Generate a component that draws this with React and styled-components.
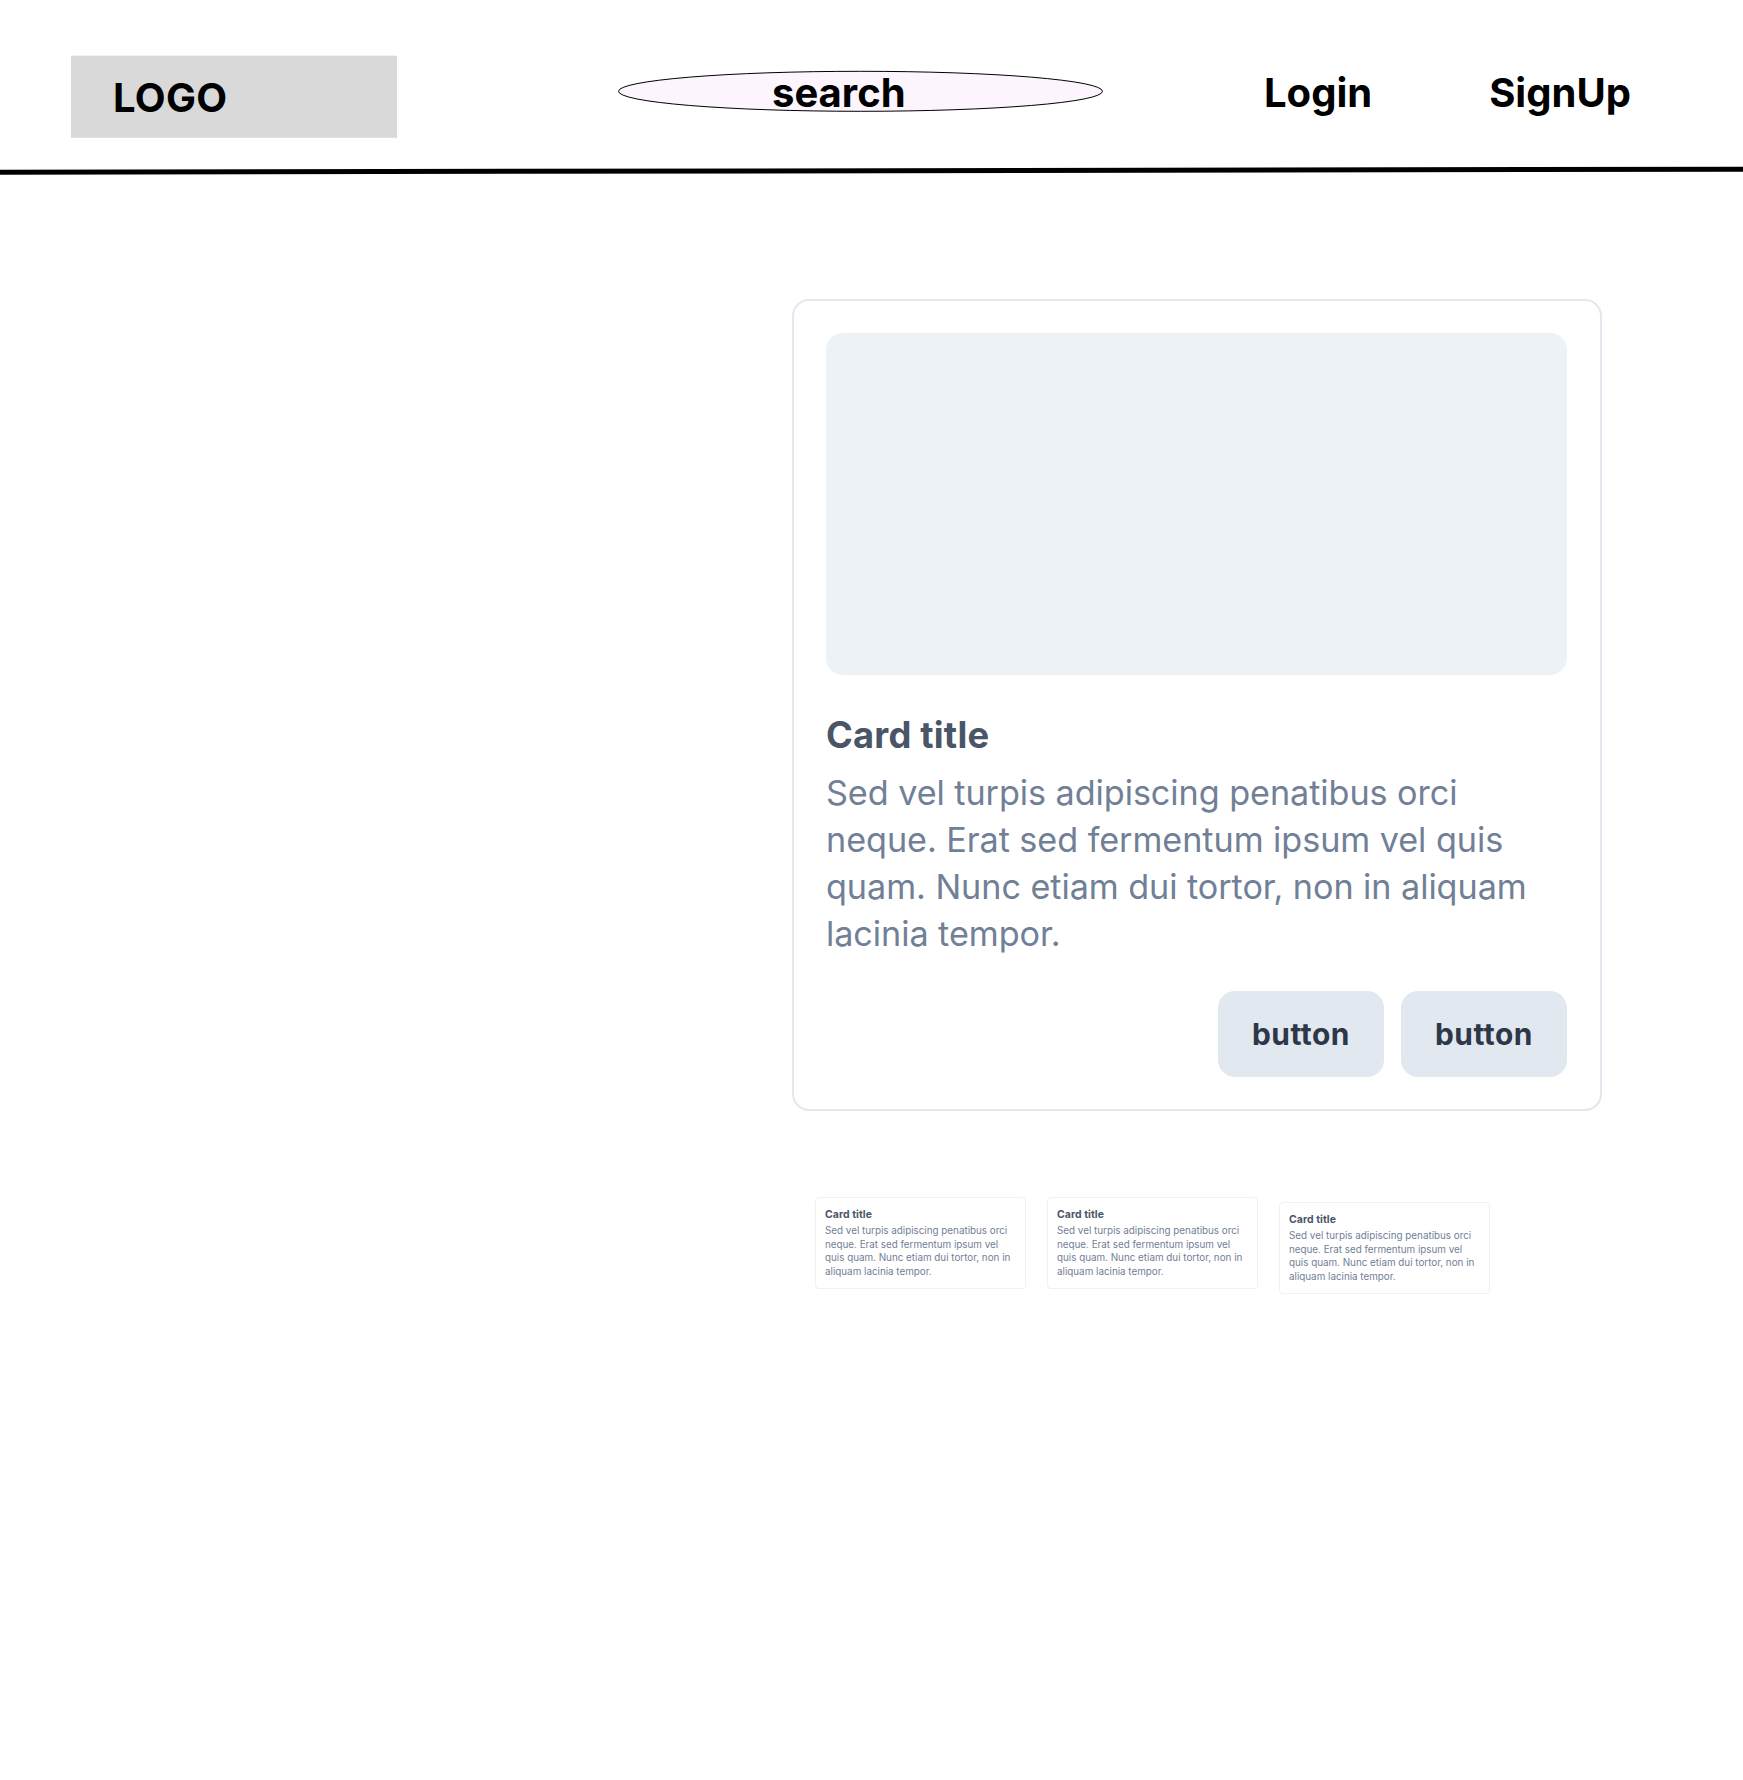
import React from "react";
import styled, { createGlobalStyle } from "styled-components";

const GlobalStyle = createGlobalStyle`
  * { box-sizing: border-box; }
  body {
    margin: 0;
    background: #ffffff;
    font-family: Inter, "Liberation Sans", sans-serif;
  }
`;

const Page = styled.div`
  width: 1743px;
  min-height: 1780px;
  overflow: hidden;
`;

const Header = styled.header`
  display: flex;
  align-items: flex-start;
  height: 166px;
  padding: 55px 0 0 71px;
`;

const HeaderText = styled.span`
  font-size: 40px;
  line-height: 48px;
  font-weight: 700;
  letter-spacing: ${(p) => p.$spacing || "normal"};
  color: #000000;
  white-space: nowrap;
`;

const Logo = styled.div`
  width: 326px;
  height: 83px;
  padding: 18px 0 0 42px;
  background: #d9d9d9;
  border-top: 1px solid #f2f2f2;
  border-bottom: 1px solid #e2e2e2;
`;

const Search = styled.div`
  display: grid;
  align-items: center;
  width: 485px;
  height: 42px;
  margin: 15px 0 0 221px;

  > * {
    grid-area: 1 / 1;
  }
`;

const SearchShape = styled.svg`
  display: block;
  width: 485px;
  height: 42px;
`;

const SearchLabel = styled.div`
  display: flex;
  align-items: center;
  height: 42px;
  padding: 3px 0 0 154px;
`;

const Nav = styled.nav`
  display: flex;
  gap: 117px;
  margin: 14px 0 0 161px;
`;

const Rule = styled.svg`
  display: block;
  width: 1743px;
  height: 10px;
`;

const Main = styled.main`
  padding: 123px 0 0 792px;
`;

const Card = styled.article`
  width: 810px;
  height: 812px;
  padding: 32px 33px 32px 32px;
  border: 2px solid #e2e8f0;
  border-radius: 17px;
`;

const Media = styled.div`
  height: 342px;
  background: #edf2f7;
  border-radius: 17px;
`;

const CardTitle = styled.h2`
  margin: 35px 0 0;
  font-size: 36.3px;
  line-height: 51px;
  font-weight: 700;
  letter-spacing: 0.2px;
  color: #4a5568;
`;

const CardText = styled.p`
  margin: 8px 0 0;
  font-size: 34.2px;
  line-height: 47px;
  letter-spacing: -0.06px;
  color: #718096;
  white-space: nowrap;
`;

const Actions = styled.div`
  display: flex;
  justify-content: flex-end;
  gap: 17px;
  margin-top: 34px;
`;

const Button = styled.button`
  width: 166px;
  height: 86px;
  padding: 1px 0 0;
  border: 0;
  border-radius: 17px;
  background: #e2e8f0;
  color: #2d3748;
  font: 700 29.9px/43px Inter, "Liberation Sans", sans-serif;
  letter-spacing: 0.5px;
`;

const SmallCards = styled.section`
  display: flex;
  align-items: flex-start;
  gap: 21px;
  margin: 86px 0 0 23px;
`;

const SmallCard = styled.article`
  width: 211px;
  height: 92px;
  margin-top: ${(p) => p.$drop || 0}px;
  padding: 9px;
  border: 1px solid #edf2f7;
  border-radius: 4px;
`;

const SmallTitle = styled.h3`
  margin: 0;
  font-size: 10.45px;
  line-height: 15px;
  font-weight: 700;
  letter-spacing: 0.06px;
  color: #4a5568;
`;

const SmallText = styled.p`
  margin: 2px 0 0;
  font-size: 9.83px;
  line-height: 13.55px;
  color: #718096;
  white-space: nowrap;
`;

const smallCards = [{ drop: 0 }, { drop: 0 }, { drop: 5 }];

export default function App() {
  return (
    <Page>
      <GlobalStyle />
      <Header>
        <Logo>
          <HeaderText $spacing="0.3px">LOGO</HeaderText>
        </Logo>
        <Search>
          <SearchShape viewBox="0 0 485 42">
            <ellipse cx="242.5" cy="21.3" rx="242" ry="20" fill="#fcf5fd" stroke="#000" strokeWidth="1" />
          </SearchShape>
          <SearchLabel>
            <HeaderText>search</HeaderText>
          </SearchLabel>
        </Search>
        <Nav>
          <HeaderText>Login</HeaderText>
          <HeaderText>SignUp</HeaderText>
        </Nav>
      </Header>
      <Rule viewBox="0 0 1743 10">
        <line x1="-10" y1="6.25" x2="1753" y2="3.21" stroke="#000" strokeWidth="5" />
      </Rule>
      <Main>
        <Card>
          <Media />
          <CardTitle>Card title</CardTitle>
          <CardText>
            Sed vel turpis adipiscing penatibus orci
            <br />
            neque. Erat sed fermentum ipsum vel quis
            <br />
            quam. Nunc etiam dui tortor, non in aliquam
            <br />
            lacinia tempor.
          </CardText>
          <Actions>
            <Button>button</Button>
            <Button>button</Button>
          </Actions>
        </Card>
        <SmallCards>
          {smallCards.map((card, i) => (
            <SmallCard key={i} $drop={card.drop}>
              <SmallTitle>Card title</SmallTitle>
              <SmallText>
                Sed vel turpis adipiscing penatibus orci
                <br />
                neque. Erat sed fermentum ipsum vel
                <br />
                quis quam. Nunc etiam dui tortor, non in
                <br />
                aliquam lacinia tempor.
              </SmallText>
            </SmallCard>
          ))}
        </SmallCards>
      </Main>
    </Page>
  );
}
